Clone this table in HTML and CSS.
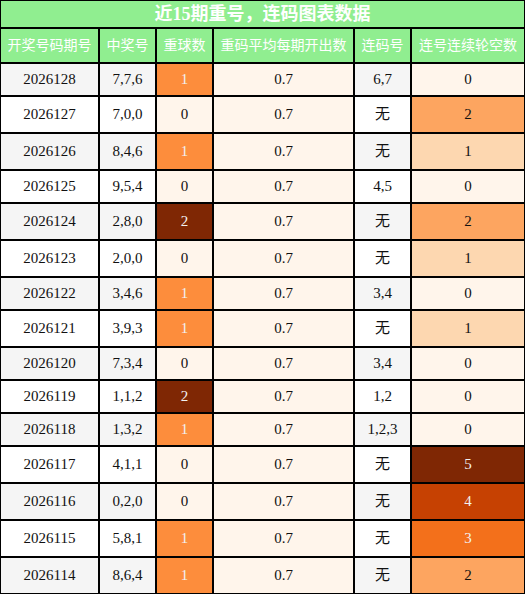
FILE: index.html
```html
<!DOCTYPE html>
<html lang="zh">
<head>
    <meta charset="UTF-8">
    <meta name="viewport" content="width=device-width, initial-scale=1.0">
    <title>近15期重号，连码图表数据</title>
    <link rel="stylesheet" href="styles.css">
</head>
<body>
    <table class="data-table">
        <colgroup>
            <col class="col-issue">
            <col class="col-num">
            <col class="col-num">
            <col class="col-avg">
            <col class="col-num">
            <col class="col-gap">
        </colgroup>
        <thead>
            <tr>
                <th class="table-title" colspan="6">近15期重号，连码图表数据</th>
            </tr>
            <tr class="head-row">
                <th>开奖号码期号</th>
                <th>中奖号</th>
                <th>重球数</th>
                <th>重码平均每期开出数</th>
                <th>连码号</th>
                <th>连号连续轮空数</th>
            </tr>
        </thead>
        <tbody>
            <tr class="odd">
                <td>2026128</td><td>7,7,6</td><td class="heat-mid">1</td><td class="heat-0">0.7</td><td>6,7</td><td class="heat-0">0</td>
            </tr>
            <tr>
                <td>2026127</td><td>7,0,0</td><td class="heat-0">0</td><td class="heat-0">0.7</td><td class="none">无</td><td class="heat-2">2</td>
            </tr>
            <tr class="odd">
                <td>2026126</td><td>8,4,6</td><td class="heat-mid">1</td><td class="heat-0">0.7</td><td class="none">无</td><td class="heat-1">1</td>
            </tr>
            <tr>
                <td>2026125</td><td>9,5,4</td><td class="heat-0">0</td><td class="heat-0">0.7</td><td>4,5</td><td class="heat-0">0</td>
            </tr>
            <tr class="odd">
                <td>2026124</td><td>2,8,0</td><td class="heat-5">2</td><td class="heat-0">0.7</td><td class="none">无</td><td class="heat-2">2</td>
            </tr>
            <tr>
                <td>2026123</td><td>2,0,0</td><td class="heat-0">0</td><td class="heat-0">0.7</td><td class="none">无</td><td class="heat-1">1</td>
            </tr>
            <tr class="odd">
                <td>2026122</td><td>3,4,6</td><td class="heat-mid">1</td><td class="heat-0">0.7</td><td>3,4</td><td class="heat-0">0</td>
            </tr>
            <tr>
                <td>2026121</td><td>3,9,3</td><td class="heat-mid">1</td><td class="heat-0">0.7</td><td class="none">无</td><td class="heat-1">1</td>
            </tr>
            <tr class="odd">
                <td>2026120</td><td>7,3,4</td><td class="heat-0">0</td><td class="heat-0">0.7</td><td>3,4</td><td class="heat-0">0</td>
            </tr>
            <tr>
                <td>2026119</td><td>1,1,2</td><td class="heat-5">2</td><td class="heat-0">0.7</td><td>1,2</td><td class="heat-0">0</td>
            </tr>
            <tr class="odd">
                <td>2026118</td><td>1,3,2</td><td class="heat-mid">1</td><td class="heat-0">0.7</td><td>1,2,3</td><td class="heat-0">0</td>
            </tr>
            <tr>
                <td>2026117</td><td>4,1,1</td><td class="heat-0">0</td><td class="heat-0">0.7</td><td class="none">无</td><td class="heat-5">5</td>
            </tr>
            <tr class="odd">
                <td>2026116</td><td>0,2,0</td><td class="heat-0">0</td><td class="heat-0">0.7</td><td class="none">无</td><td class="heat-4">4</td>
            </tr>
            <tr>
                <td>2026115</td><td>5,8,1</td><td class="heat-mid">1</td><td class="heat-0">0.7</td><td class="none">无</td><td class="heat-3">3</td>
            </tr>
            <tr class="odd">
                <td>2026114</td><td>8,6,4</td><td class="heat-mid">1</td><td class="heat-0">0.7</td><td class="none">无</td><td class="heat-2">2</td>
            </tr>
        </tbody>
    </table>
</body>
</html>
```

FILE: styles.css
```css
* {
    margin: 0;
    padding: 0;
    box-sizing: border-box;
}

body {
    font-family: 'Liberation Serif', 'Noto Sans CJK SC', serif;
    background: white;
}

.data-table {
    width: 525px;
    table-layout: fixed;
    border-collapse: separate;
    border-spacing: 0;
}

.col-issue { width: 99px; }
.col-num { width: 57px; }
.col-avg { width: 141px; }
.col-gap { width: 114px; }

.data-table th,
.data-table td {
    border: 1px solid #000;
    text-align: center;
    white-space: nowrap;
}

.table-title {
    background: #90ee90;
    color: white;
    font-size: 18px;
    font-weight: bold;
    line-height: 22px;
    padding: 2px 0;
}

.head-row th {
    background: #90ee90;
    color: white;
    font-size: 14px;
    font-weight: normal;
    line-height: 19px;
    padding: 7px 0;
}

.data-table td {
    font-size: 15px;
    line-height: 17px;
    padding: 7px 0;
    color: #111;
    background: white;
}

.data-table tr.odd td {
    background: #f5f5f5;
}

.data-table td.none {
    line-height: 21px;
}

/* heatmap colours (Oranges) */
.data-table td.heat-0,
.data-table tr.odd td.heat-0 { background: #fff5eb; }
.data-table td.heat-1,
.data-table tr.odd td.heat-1 { background: #fdd7b0; }
.data-table td.heat-2,
.data-table tr.odd td.heat-2 { background: #fda560; }
.data-table td.heat-mid,
.data-table tr.odd td.heat-mid { background: #fd8d3c; color: #f1f1f1; }
.data-table td.heat-3,
.data-table tr.odd td.heat-3 { background: #f3701b; color: #f1f1f1; }
.data-table td.heat-4,
.data-table tr.odd td.heat-4 { background: #c64102; color: #f1f1f1; }
.data-table td.heat-5,
.data-table tr.odd td.heat-5 { background: #7f2704; color: #f1f1f1; }
```
